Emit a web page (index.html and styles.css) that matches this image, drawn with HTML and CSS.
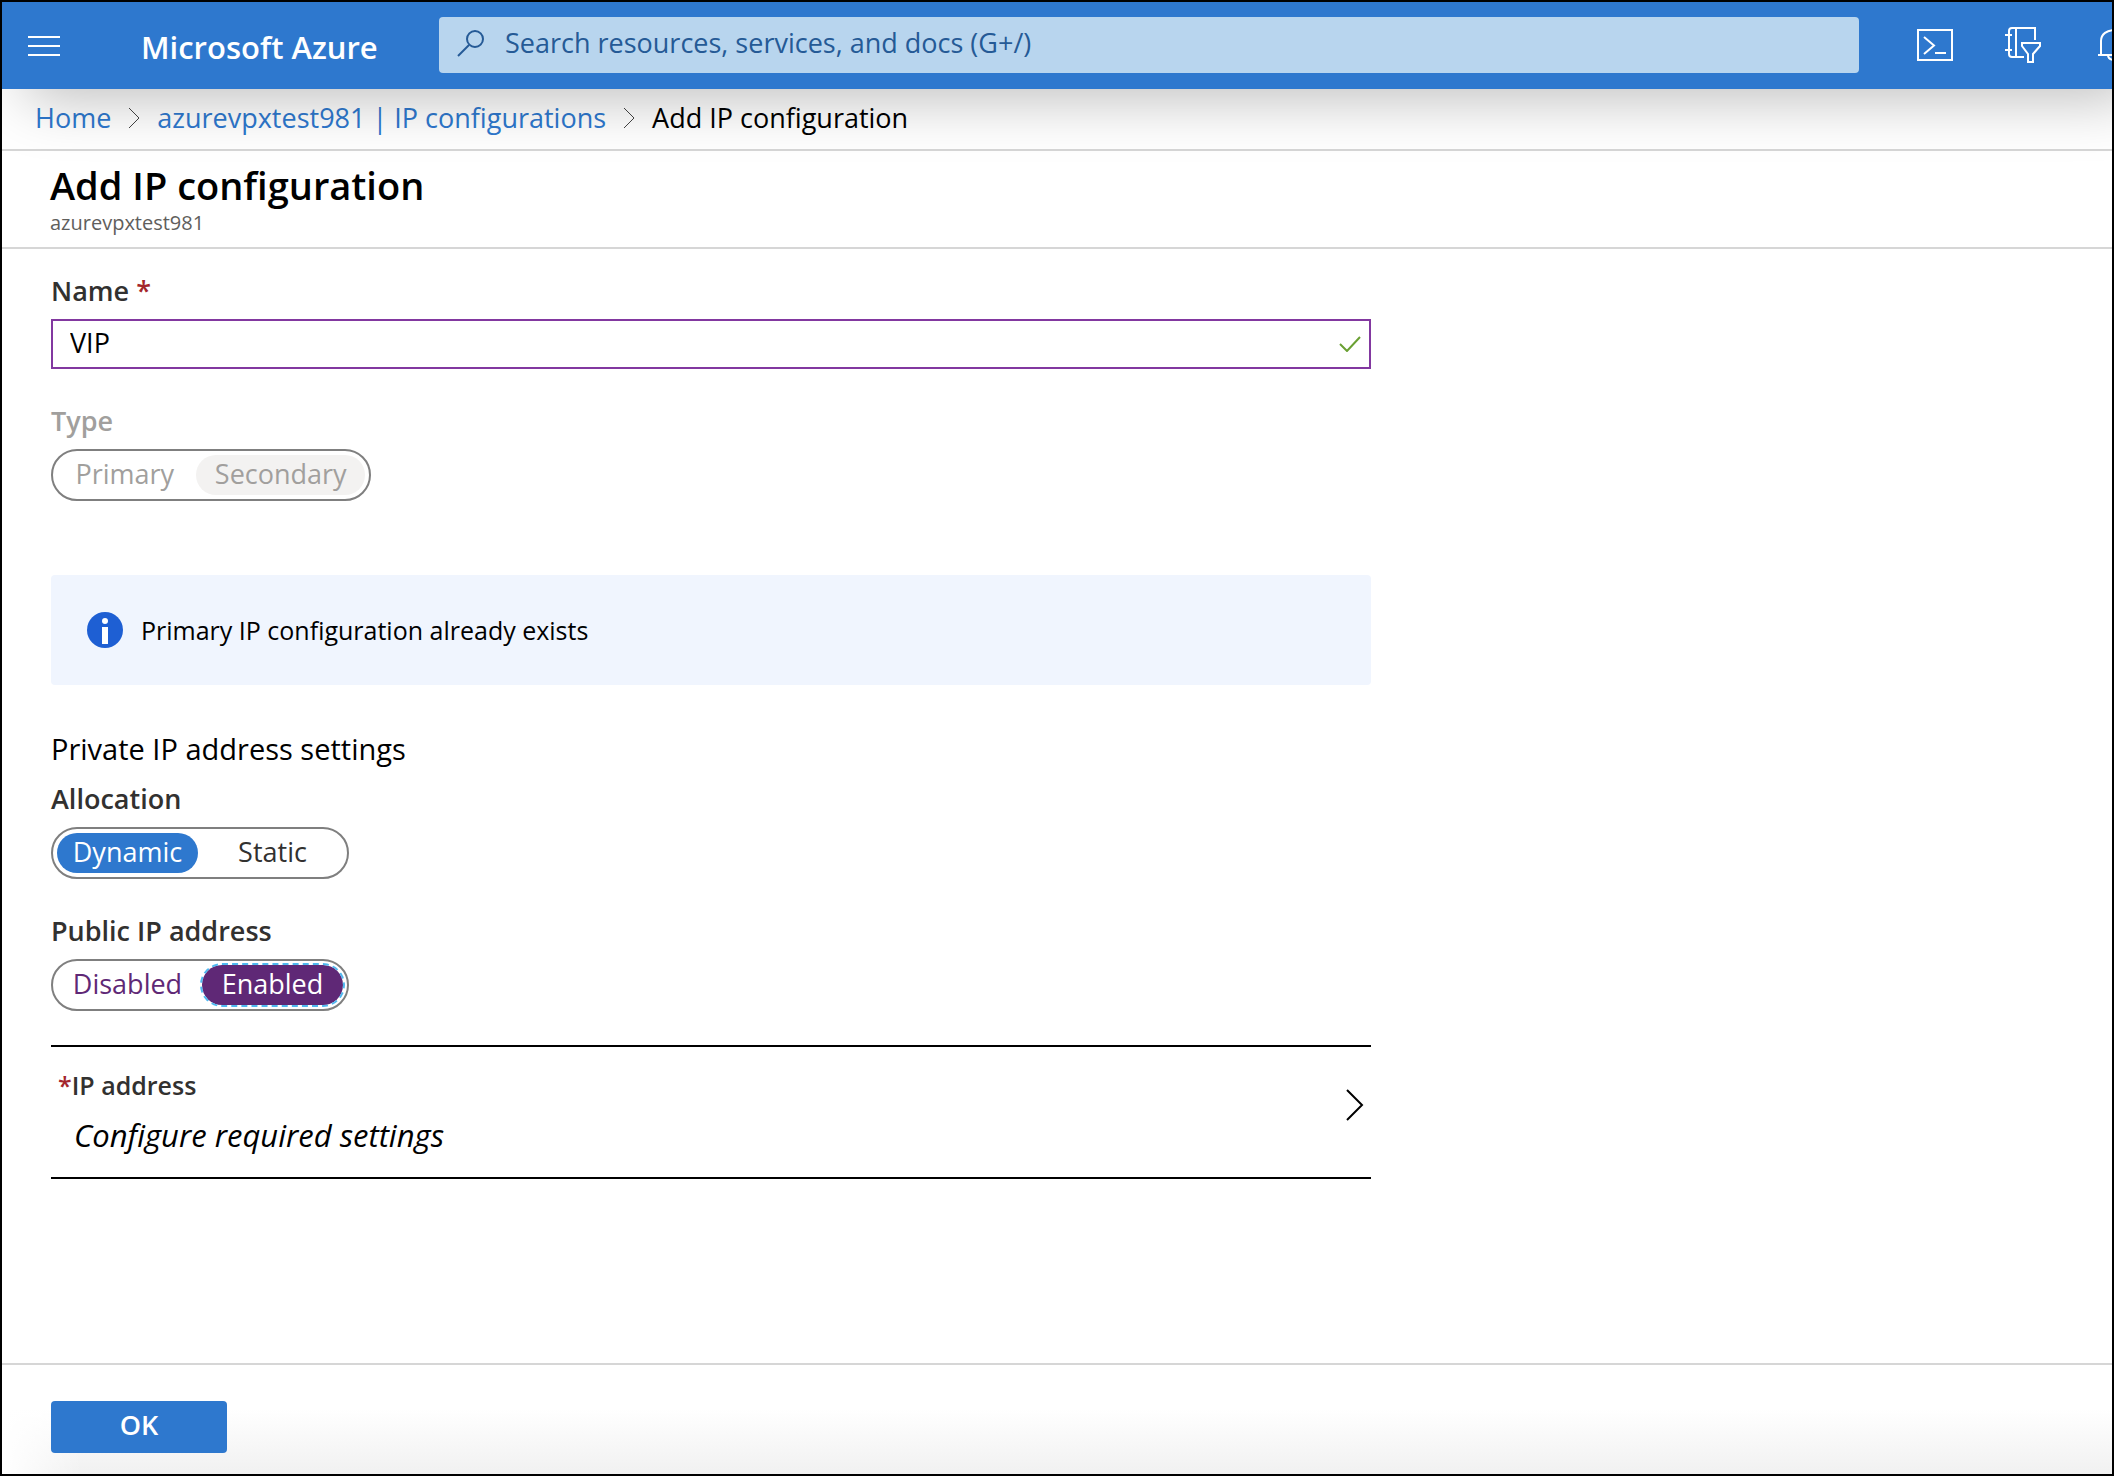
FILE: index.html
```html
<!DOCTYPE html>
<html lang="en">
<head>
<meta charset="utf-8">
<meta name="viewport" content="width=device-width, initial-scale=1">
<title>Add IP configuration - Microsoft Azure</title>
<link rel="stylesheet" href="styles.css">
</head>
<body>
<div class="portal">
  <header class="topbar">
    <button class="icon-button menu-button" type="button" aria-label="Show portal menu">
      <svg width="32" height="20" viewBox="0 0 32 20" fill="none" stroke="currentColor" stroke-width="2"><path d="M0 1h32M0 10h32M0 19h32"/></svg>
    </button>
    <a class="brand" href="#">Microsoft Azure</a>
    <div class="search">
      <svg class="search-icon" width="28" height="28" viewBox="0 0 28 28" fill="none" stroke="currentColor" stroke-width="2"><circle cx="18" cy="10" r="8"/><path d="M12 16L1 27"/></svg>
      <input class="search-input" type="text" aria-label="Search" placeholder="Search resources, services, and docs (G+/)">
    </div>
    <div class="tools">
      <button class="icon-button" type="button" aria-label="Cloud Shell">
        <svg width="36" height="36" viewBox="0 0 36 36" fill="none" stroke="currentColor" stroke-width="2"><path d="M1 3h34v30H1z"/><path d="M7 10l10 8.500-10 8.500M18 26h11"/></svg>
      </button>
      <button class="icon-button" type="button" aria-label="Directories and subscriptions">
        <svg width="36" height="36" viewBox="0 0 36 36" fill="none" stroke="currentColor" stroke-width="2"><path d="M30 13V1H7a3 3 0 0 0-3 3v23a3 3 0 0 0 3 3h12M11 1v29M0 8h7M0 23h7"/><path d="M17 16h18v3l-7 8v8h-5v-8l-6-8z"/></svg>
      </button>
      <button class="icon-button bell" type="button" aria-label="Notifications">
        <svg width="42" height="36" viewBox="0 0 42 36" fill="none" stroke="currentColor" stroke-width="2"><path d="M5 28h34M8 28V14C8 7 14 3 22 3s14 4 14 11v14M15 28c0 4 3 5 7 5s7-1 7-5"/></svg>
      </button>
    </div>
  </header>

  <nav class="breadcrumb" aria-label="Breadcrumb">
    <a href="#">Home</a>
    <svg width="12" height="22" viewBox="0 0 12 22" fill="none" stroke="currentColor"><path d="M1 1l10 10L1 21"/></svg>
    <a href="#">azurevpxtest981 | IP configurations</a>
    <svg width="12" height="22" viewBox="0 0 12 22" fill="none" stroke="currentColor"><path d="M1 1l10 10L1 21"/></svg>
    <span>Add IP configuration</span>
  </nav>

  <div class="blade-title">
    <h1>Add IP configuration</h1>
    <p>azurevpxtest981</p>
  </div>

  <main class="blade">
    <form class="form" id="ip-form">
      <div class="field">
        <label class="label" for="name">Name <span class="required">*</span></label>
        <div class="text-box">
          <input id="name" type="text" value="VIP">
          <svg width="22" height="16" viewBox="0 0 22 16" fill="none" stroke="currentColor" stroke-width="2"><path d="M1 8l7 7L21 1"/></svg>
        </div>
      </div>

      <fieldset class="field field-type" disabled>
        <legend class="label">Type</legend>
        <div class="switch switch-wide">
          <label><input type="radio" name="type"><span>Primary</span></label>
          <label><input type="radio" name="type" checked><span>Secondary</span></label>
        </div>
      </fieldset>

      <div class="notice" role="status">
        <svg width="36" height="36" viewBox="0 0 36 36"><circle cx="18" cy="18" r="18" fill="#1e5fd3"/><circle cx="18" cy="9" r="3" fill="#fff"/><path d="M15 15h6v17h-6z" fill="#fff"/></svg>
        <span>Primary IP configuration already exists</span>
      </div>

      <h2>Private IP address settings</h2>

      <fieldset class="field">
        <legend class="label">Allocation</legend>
        <div class="switch">
          <label><input type="radio" name="allocation" checked><span>Dynamic</span></label>
          <label><input type="radio" name="allocation"><span>Static</span></label>
        </div>
      </fieldset>

      <fieldset class="field">
        <legend class="label">Public IP address</legend>
        <div class="switch switch-edited">
          <label><input type="radio" name="public"><span>Disabled</span></label>
          <label><input type="radio" name="public" checked><span>Enabled</span></label>
        </div>
      </fieldset>

      <button class="selector" type="button">
        <span class="selector-text">
          <span class="selector-label"><span class="required">*</span>IP address</span>
          <span class="selector-value">Configure required settings</span>
        </span>
        <svg width="18" height="32" viewBox="0 0 18 32" fill="none" stroke="currentColor" stroke-width="2"><path d="M1 1l15 15L1 31"/></svg>
      </button>
    </form>
  </main>

  <footer class="actions">
    <button class="primary" type="submit" form="ip-form">OK</button>
  </footer>
</div>
</body>
</html>
```
FILE: styles.css
```css
* {
  box-sizing: border-box;
}

body {
  margin: 0;
  font-family: "Open Sans", "Noto Sans", sans-serif;
  font-size: 27px;
  line-height: 40px;
  color: #000;
  background: #fff;
}

button,
input {
  font: inherit;
  color: inherit;
}

button {
  cursor: pointer;
}

svg {
  display: block;
  flex: none;
}

a {
  color: #2e78ce;
  text-decoration: none;
}

.portal {
  display: flex;
  flex-direction: column;
  min-height: 100vh;
  overflow: hidden;
  border: 2px solid #000;
}

/* Top bar */

.topbar {
  z-index: 1;
  display: flex;
  align-items: center;
  height: 87px;
  padding-left: 26px;
  color: #fff;
  background: #2e78ce;
  box-shadow: 24px 10px 60px rgba(0, 0, 0, 0.26);
}

.icon-button {
  flex: none;
  padding: 0;
  border: 0;
  background: none;
}

.brand {
  width: 298px;
  margin-left: 81px;
  padding-top: 2px;
  font-size: 31px;
  font-weight: 600;
  white-space: nowrap;
  color: #fff;
}

.search {
  display: flex;
  flex: 1;
  align-items: center;
  gap: 20px;
  min-width: 0;
  height: 56px;
  margin-bottom: 2px;
  padding: 0 18px 4px;
  border-radius: 4px;
  color: #255a96;
  background: #b8d5ee;
}

.search-input {
  flex: 1;
  min-width: 0;
  padding: 0;
  border: 0;
  outline: 0;
  background: none;
}

.search-input::placeholder {
  color: inherit;
  opacity: 1;
}

.tools {
  display: flex;
  gap: 52px;
  padding: 0 0 2px 58px;
}

.bell {
  margin-right: -23px;
}

/* Breadcrumb and title */

.breadcrumb {
  display: flex;
  align-items: center;
  gap: 17px;
  height: 62px;
  padding: 0 33px 2px;
  border-bottom: 2px solid #d6d6d6;
}

.breadcrumb svg {
  color: #444;
}

.blade-title {
  height: 98px;
  padding: 10px 48px 0;
  border-bottom: 2px solid #d6d6d6;
}

.blade-title h1 {
  margin: 0;
  font-size: 38px;
  font-weight: 600;
  line-height: 48px;
}

.blade-title p {
  margin: 0;
  font-size: 20px;
  line-height: 28px;
  color: #605e5c;
}

/* Form */

.blade {
  flex: 1;
  padding: 22px 49px 40px;
}

.form {
  max-width: 1320px;
}

.field {
  min-width: 0;
  margin: 0 0 32px;
  padding: 0;
  border: 0;
}

.label {
  display: block;
  padding: 0 0 8px;
  font-weight: 600;
  color: #323130;
}

.required {
  color: #a4262c;
}

.text-box {
  display: flex;
  align-items: center;
  height: 50px;
  padding: 0 8px 0 17px;
  border: 2px solid #8238a0;
  color: #6aa033;
}

.text-box input {
  flex: 1;
  min-width: 0;
  padding: 0 0 2px;
  border: 0;
  outline: 0;
  color: #000;
  background: none;
}

.switch {
  display: flex;
  gap: 4px;
  width: 298px;
  height: 52px;
  padding: 4px;
  border: 2px solid #7f7f7f;
  border-radius: 26px;
  line-height: 38px;
  color: #323130;
}

.switch label {
  display: flex;
  flex: 1 1 0;
}

.switch input {
  position: absolute;
  opacity: 0;
}

.switch span {
  flex: 1;
  border-radius: 20px;
  text-align: center;
}

.switch input:checked + span {
  color: #fff;
  background: #2e78ce;
}

.switch-edited {
  color: #5f2876;
}

.switch-edited input:checked + span {
  background: #5f2876;
  outline: 2px dashed #50b8f0;
}

.switch-wide {
  width: 320px;
}

.switch-wide label {
  flex: 1 1 auto;
}

.switch-wide span {
  padding: 0 16px;
}

.field-type {
  margin-bottom: 74px;
}

.field-type .label,
.field-type .switch,
.field-type input:checked + span {
  color: #a19f9d;
}

.field-type input:checked + span {
  background: #f3f2f1;
}

.notice {
  display: flex;
  align-items: center;
  gap: 18px;
  min-height: 110px;
  margin-bottom: 44px;
  padding: 20px 36px;
  border-radius: 4px;
  font-size: 25px;
  background: #f0f5fe;
}

h2 {
  margin: 0 0 10px;
  font-size: 29px;
  font-weight: 400;
}

.selector {
  display: flex;
  justify-content: space-between;
  width: 100%;
  min-height: 134px;
  margin-top: 34px;
  padding: 18px 7px 20px;
  border: solid #000;
  border-width: 2px 0;
  text-align: left;
  background: none;
}

.selector svg {
  margin-top: 24px;
}

.selector-text {
  display: flex;
  flex-direction: column;
  gap: 10px;
}

.selector-label {
  font-size: 25px;
  font-weight: 600;
  color: #323130;
}

.selector-value {
  padding-left: 16px;
  font-size: 31px;
  font-style: italic;
}

/* Footer */

.actions {
  height: 111px;
  padding: 36px 49px 0;
  border-top: 2px solid #d6d6d6;
  background:
    linear-gradient(to right, #fff, transparent 80px),
    linear-gradient(#fff 40%, #f1f1f1);
}

.primary {
  width: 176px;
  height: 52px;
  padding: 0 0 4px;
  border: 0;
  border-radius: 4px;
  font-weight: 600;
  color: #fff;
  background: #2e78ce;
}
```
